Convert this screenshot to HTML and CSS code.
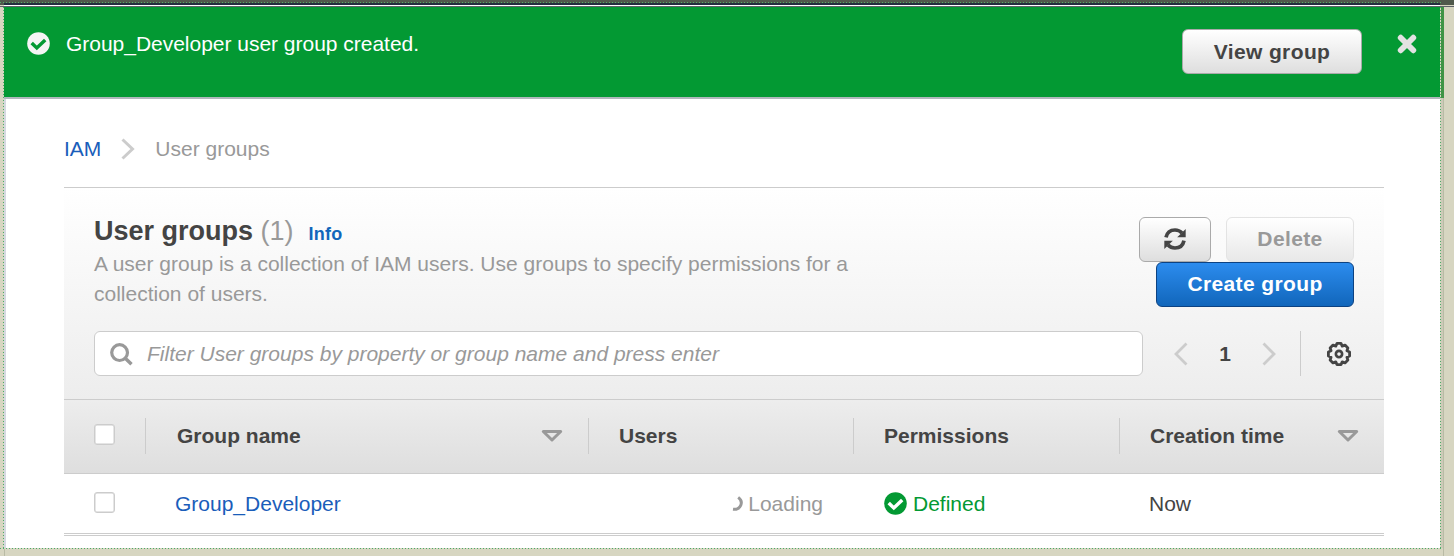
FILE: index.html
```html
<!DOCTYPE html>
<html lang="en">
<head>
<meta charset="utf-8">
<title>User groups</title>
<link rel="stylesheet" href="styles.css">
</head>
<body>
<div class="topbar"><div class="topbar-dots"></div><div class="topbar-navy"></div><div class="topbar-light"></div><div class="topbar-edge"></div></div>
<div class="frame">
  <div class="gutter-left"></div>
  <div class="page">
    <div class="flash">
      <svg class="flash-icon" width="23" height="23" viewBox="0 0 23 23"><circle cx="11.5" cy="11.5" r="11.3" fill="#f5f5f5"/><path d="M4.7 11 L9.8 15.9 L18.2 8" fill="none" stroke="#039933" stroke-width="3.5"/></svg>
      <span class="flash-text">Group_Developer user group created.</span>
      <button class="btn btn-view">View group</button>
      <svg class="flash-close" width="20" height="20" viewBox="0 0 20 20"><path d="M3.7 3.7 L16.3 16.3 M16.3 3.7 L3.7 16.3" stroke="#e2e2e2" stroke-width="5.8" stroke-linecap="round"/></svg>
    </div>
    <div class="content">
      <nav class="crumbs">
        <a class="link">IAM</a>
        <svg class="crumb-arrow" width="14" height="22" viewBox="0 0 14 22"><path d="M1.5 1.5 L11.5 11 L1.5 20.5" fill="none" stroke="#ccc" stroke-width="3"/></svg>
        <span>User groups</span>
      </nav>
      <section class="panel">
        <div class="panel-head">
          <div class="title-row">
            <div class="title-block">
              <h1>User groups <span class="count">(1)</span><a class="info">Info</a></h1>
              <p>A user group is a collection of IAM users. Use groups to specify permissions for a collection of users.</p>
            </div>
            <div class="actions">
              <div class="actions-line">
                <button class="btn btn-refresh" aria-label="Refresh"><svg width="22" height="22" viewBox="0 0 22 22"><path d="M2 9.4 C3 4.7 6.5 2 11 2 C14 2 16.3 3.2 18 5" fill="none" stroke="#444" stroke-width="3.7"/><path d="M21.7 1 V9.3 H13.2 Z" fill="#444"/><path d="M20 12.6 C19 17.3 15.5 20 11 20 C8 20 5.7 18.8 4 17" fill="none" stroke="#444" stroke-width="3.7"/><path d="M.3 21 V12.7 H8.8 Z" fill="#444"/></svg></button>
                <button class="btn btn-delete">Delete</button>
              </div>
              <button class="btn btn-create">Create group</button>
            </div>
          </div>
          <div class="filter-row">
            <div class="filter">
              <svg class="search" width="23" height="23" viewBox="0 0 23 23"><circle cx="9.6" cy="9.6" r="7.9" fill="none" stroke="#999" stroke-width="3.2"/><path d="M15 15 L21.5 21.3" stroke="#999" stroke-width="3.5"/></svg>
              <span>Filter User groups by property or group name and press enter</span>
            </div>
            <div class="pager">
              <svg width="14" height="24" viewBox="0 0 14 24"><path d="M12.5 1.5 L2 12 L12.5 22.5" fill="none" stroke="#ccc" stroke-width="2.8"/></svg>
              <b>1</b>
              <svg width="14" height="24" viewBox="0 0 14 24"><path d="M1.5 1.5 L12 12 L1.5 22.5" fill="none" stroke="#ccc" stroke-width="2.8"/></svg>
            </div>
            <div class="settings">
              <svg width="26" height="26" viewBox="-13 -13 26 26"><path d="M-2 -10.6 L2 -10.6 L3.2 -7.9 L6 -8.9 L8.9 -6 L7.9 -3.2 L10.6 -2 L10.6 2 L7.9 3.2 L8.9 6 L6 8.9 L3.2 7.9 L2 10.6 L-2 10.6 L-3.2 7.9 L-6 8.9 L-8.9 6 L-7.9 3.2 L-10.6 2 L-10.6 -2 L-7.9 -3.2 L-8.9 -6 L-6 -8.9 L-3.2 -7.9 Z" fill="none" stroke="#444" stroke-width="2.8" stroke-linejoin="round"/><circle r="3.1" fill="none" stroke="#444" stroke-width="2.7"/></svg>
            </div>
          </div>
        </div>
        <div class="grid-row grid-head">
          <div class="cell-check"><i class="checkbox"></i></div>
          <div class="head-cell head-name">Group name<svg width="22" height="14" viewBox="0 0 22 14"><path d="M2.3 2.5 H19.7 L11 11 Z" fill="none" stroke="#999" stroke-width="3" stroke-linejoin="round"/></svg></div>
          <div class="head-cell">Users</div>
          <div class="head-cell">Permissions</div>
          <div class="head-cell">Creation time<svg width="22" height="14" viewBox="0 0 22 14"><path d="M2.3 2.5 H19.7 L11 11 Z" fill="none" stroke="#999" stroke-width="3" stroke-linejoin="round"/></svg></div>
        </div>
        <div class="grid-row grid-body">
          <div class="cell-check"><i class="checkbox"></i></div>
          <div class="cell"><a class="link">Group_Developer</a></div>
          <div class="cell cell-loading"><svg width="12" height="16" viewBox="0 0 12 16"><path d="M6.2 1.4 C12 5.5 9 14.2 1 13.2" fill="none" stroke="#999" stroke-width="3"/></svg>Loading</div>
          <div class="cell cell-ok"><svg width="23" height="23" viewBox="0 0 23 23"><circle cx="11.5" cy="11.5" r="11.3" fill="#039933"/><path d="M4.7 11 L9.8 15.9 L18.2 8" fill="none" stroke="#fff" stroke-width="3.5"/></svg>Defined</div>
          <div class="cell">Now</div>
        </div>
      </section>
    </div>
  </div>
  <div class="gutter-right"></div>
</div>
<div class="bottom"></div>
</body>
</html>
```
FILE: styles.css
```css
* { box-sizing: border-box; }
body {
  margin: 0;
  width: 1454px;
  height: 556px;
  overflow: hidden;
  display: flex;
  flex-direction: column;
  background: #d7d6c1;
  font: 21px/30px "Liberation Sans", Arial, sans-serif;
  color: #444;
}
svg { display: block; flex: none; }
.topbar { height: 7px; padding-top: 2px; background: #50594c; }
.topbar-dots { width: 1441px; height: 1px; background: repeating-linear-gradient(90deg, #55ad6a 0 1px, transparent 1px 3px); }
.topbar-navy { height: 2px; margin-left: 4px; width: 1436px; background: #232f3e; }
.topbar-light { height: 1px; background: linear-gradient(90deg, #d7d6c1 4px, #fff 4px 1440px, #d7d6c1 1440px); }
.topbar-edge { height: 1px; background: #5d6167; }
.frame { display: flex; height: 541px; }
.gutter-left { width: 4px; background: repeating-linear-gradient(#4caa68 0 1px, #d7d6c1 1px 3px) 3px 0 / 1px 100% no-repeat; }
.page { width: 1436px; background: #fff; }
.gutter-right {
  width: 14px;
  background:
    repeating-linear-gradient(#4caa68 0 1px, #d7d6c1 1px 3px) 0 0 / 1px 100% no-repeat,
    linear-gradient(#3f9445, #3f9445) 1px 0 / 3px 91px no-repeat,
    linear-gradient(90deg, #cccbb7 2px, #b9bba5 2px) 1px 0 / 3px 100% no-repeat;
}
.flash {
  display: flex;
  align-items: flex-start;
  height: 92px;
  padding: 22px 23px 0 24px;
  background: #039933;
  border-bottom: 2px solid #b0b8bc;
  color: #fff;
}
.flash-icon { margin: 3px 0 0 -1px; }
.flash-text { margin-left: 16px; flex: 1; letter-spacing: -.02px; }
.flash-close { margin: 5px 0 0 35px; }
.btn {
  height: 45px;
  padding: 0;
  border: 1px solid #aaa;
  border-radius: 6px;
  background: linear-gradient(#fff, #dedede);
  font: bold 21px/30px "Liberation Sans", Arial, sans-serif;
  letter-spacing: .38px;
  color: #444;
}
.btn-view { width: 180px; }
.btn-refresh { display: flex; align-items: center; justify-content: center; width: 72px; padding-bottom: 2px; }
.btn-delete { width: 128px; padding-bottom: 2px; border-color: #e3e3e3; background: linear-gradient(#fff, #e8e8e8); color: #999; }
.btn-create { width: 198px; padding-bottom: 2px; border-color: #0c4282; background: linear-gradient(#2c8cee, #1166bb); color: #fff; }
.content { height: 449px; padding: 35px 56px 0 58px; border-left: 2px solid #d5d9e0; }
.crumbs { display: flex; align-items: center; height: 30px; color: #999; }
.crumb-arrow { margin: 0 20px; }
.link { color: #1a5dba; }
.panel { margin-top: 23px; border-top: 1px solid #ccc; }
.panel-head { height: 211px; padding: 29px 30px 0; background: linear-gradient(#fff, #ededed); }
.title-row { display: flex; justify-content: space-between; height: 90px; }
.title-block { width: 780px; margin-top: -1px; }
h1 { margin: 0; font-size: 27px; line-height: 30px; }
.count { font-weight: 400; color: #999; }
.info { margin-left: 15px; font-size: 18px; letter-spacing: .2px; color: #1166bb; }
p { margin: 0; color: #999; }
.actions { display: flex; flex-direction: column; align-items: flex-end; }
.actions-line { display: flex; gap: 15px; }
.filter-row { display: flex; align-items: center; height: 45px; margin-top: 24px; }
.filter {
  display: flex;
  align-items: center;
  gap: 14px;
  width: 1049px;
  height: 45px;
  padding-left: 15px;
  border: 1px solid #ccc;
  border-radius: 6px;
  background: #fff;
  color: #999;
  font-style: italic;
}
.search { margin-top: 2px; }
.pager { display: flex; align-items: center; justify-content: space-between; width: 103px; margin-left: 31px; padding-right: 1px; }
.settings { display: flex; align-items: center; height: 45px; margin-left: 23px; padding-left: 25px; border-left: 1px solid #ccc; }
.grid-row { display: grid; grid-template-columns: 81px 443px 265px 266px 265px; align-items: center; }
.grid-head { height: 75px; padding-bottom: 2px; border: solid #ccc; border-width: 1px 0; background: linear-gradient(#ededed, #dedede); font-weight: bold; }
.cell-check { padding-left: 30px; }
.checkbox { display: block; width: 21px; height: 21px; margin-top: -3px; border: 1px solid #ccc; border-radius: 3px; background: #fff; box-shadow: inset 0 0 0 .5px #ccc; }
.head-cell { display: flex; align-items: center; justify-content: space-between; height: 36px; padding: 0 25px 0 30px; border-left: 1px solid #ccc; }
.head-name { padding-left: 31px; }
.grid-body { height: 62px; border-bottom: 3px double #ccc; }
.cell { display: flex; align-items: center; padding: 0 30px; }
.cell-loading { justify-content: flex-end; gap: 4px; color: #999; }
.cell-ok { gap: 6px; padding-left: 31px; color: #039933; }
.bottom { height: 8px; width: 1444px; border-right: 1px solid #b9bba5; background: repeating-linear-gradient(90deg, #4caa68 0 1px, transparent 1px 3px) 0 0 / 1441px 1px no-repeat, linear-gradient(#b9bba5, #b9bba5) 4px 1px / 1px 7px no-repeat; }
```
